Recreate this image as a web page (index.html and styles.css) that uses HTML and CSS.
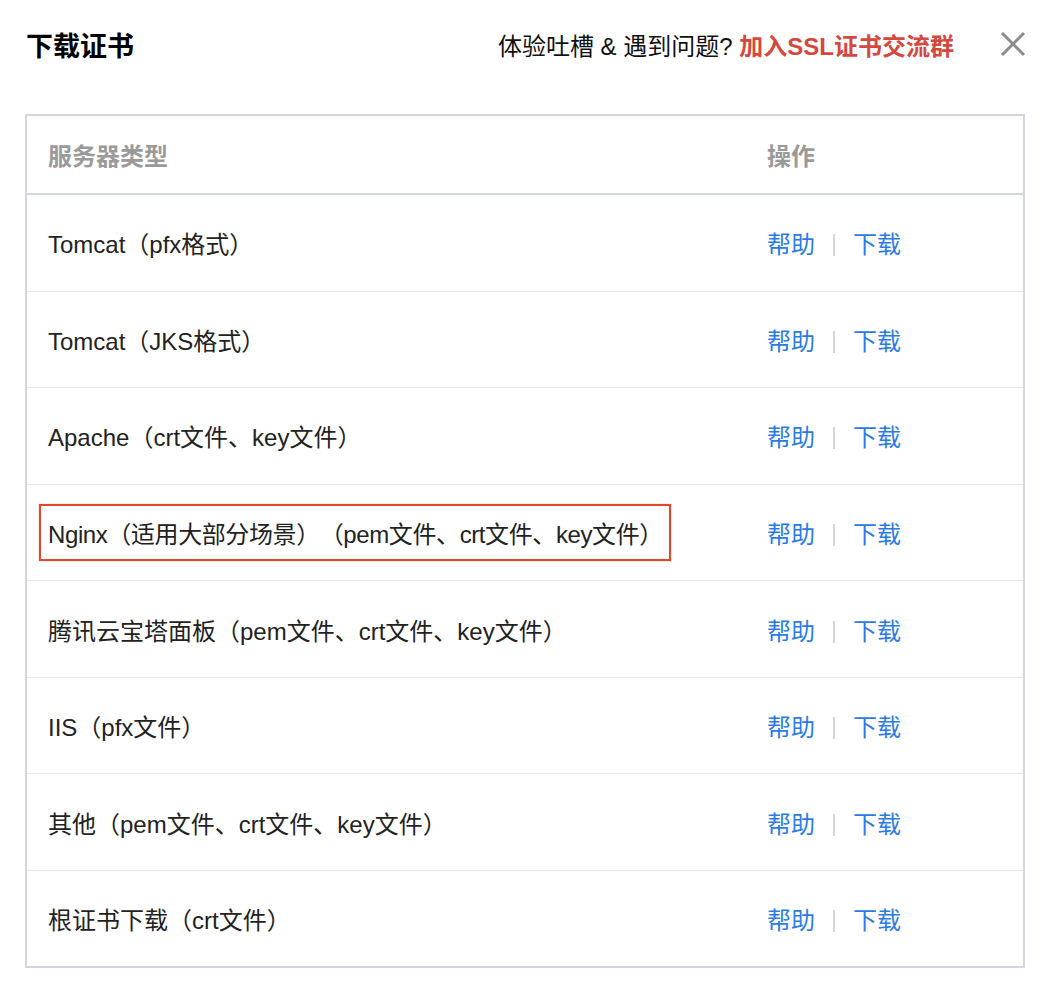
FILE: index.html
```html
<!DOCTYPE html>
<html lang="zh-CN">
<head>
<meta charset="utf-8">
<title>下载证书</title>
<link rel="stylesheet" href="styles.css">
</head>
<body>
<div class="dialog">
  <div class="head">
    <h1 class="title">下载证书</h1>
    <div class="feedback">体验吐槽 &amp; 遇到问题? <a class="join">加入SSL证书交流群</a></div>
    <span class="close">
      <svg width="26" height="26" viewBox="0 0 26 26"><path d="M2 2 L24 24 M24 2 L2 24" stroke="#8c8c8c" stroke-width="3" fill="none"/></svg>
    </span>
  </div>
  <table class="grid">
    <thead>
      <tr><th class="c-type">服务器类型</th><th class="c-op">操作</th></tr>
    </thead>
    <tbody>
      <tr><td>Tomcat（pfx格式）</td><td class="ops"><a>帮助</a><span class="sep"></span><a>下载</a></td></tr>
      <tr><td>Tomcat（JKS格式）</td><td class="ops"><a>帮助</a><span class="sep"></span><a>下载</a></td></tr>
      <tr><td>Apache（crt文件、key文件）</td><td class="ops"><a>帮助</a><span class="sep"></span><a>下载</a></td></tr>
      <tr><td><span class="mark">Nginx（适用大部分场景）（pem文件、crt文件、key文件）</span></td><td class="ops"><a>帮助</a><span class="sep"></span><a>下载</a></td></tr>
      <tr><td>腾讯云宝塔面板（pem文件、crt文件、key文件）</td><td class="ops"><a>帮助</a><span class="sep"></span><a>下载</a></td></tr>
      <tr><td>IIS（pfx文件）</td><td class="ops"><a>帮助</a><span class="sep"></span><a>下载</a></td></tr>
      <tr><td>其他（pem文件、crt文件、key文件）</td><td class="ops"><a>帮助</a><span class="sep"></span><a>下载</a></td></tr>
      <tr><td>根证书下载（crt文件）</td><td class="ops"><a>帮助</a><span class="sep"></span><a>下载</a></td></tr>
    </tbody>
  </table>
</div>
</body>
</html>
```
FILE: styles.css
```css
* { box-sizing: border-box; }
html, body { margin: 0; padding: 0; background: #fff; }
body {
  font-family: "Liberation Sans", "Noto Sans CJK SC", sans-serif;
  color: #222;
  font-size: 24px;
  text-spacing-trim: space-all;
}
.dialog { padding: 0 25px; width: 1050px; }
.head {
  display: flex;
  align-items: center;
  height: 88px;
  margin-bottom: 26px;
}
.title {
  margin: 0 0 0 1px;
  font-size: 27px;
  font-weight: 700;
  color: #000;
  flex: 1;
}
.feedback { color: #111; font-size: 24px; }
.join { color: #d4483f; font-weight: 700; }
.close { display: flex; margin-left: 46px; margin-right: -1px; }
.grid {
  width: 1000px;
  border-collapse: collapse;
  border: 2px solid #d3d6df;
}
.grid th {
  height: 79px;
  text-align: left;
  font-weight: 600;
  color: #9a9a9a;
  padding: 0 0 0 21px;
  border-bottom: 2px solid #d3d6df;
}
.grid .c-op { width: 278px; }
.grid td {
  height: 96.6px;
  padding: 0 0 0 21px;
  border-top: 1px solid #e6e7ea;
  white-space: nowrap;
}
.grid tbody tr:first-child td { border-top: 0; height: 97px; }
.ops a { color: #2b7be6; }
.sep {
  display: inline-block;
  width: 2px;
  height: 22px;
  background: #d6d6d6;
  margin: 0 18px 0 18px;
  vertical-align: -3px;
}
.mark {
  display: inline-block;
  border: 2px solid #e0482a;
  padding: 9px 6px 9px 7px;
  margin-left: -9px;
  letter-spacing: -0.4px;
  box-shadow: 0 0 1px rgba(224, 72, 42, 0.6);
}
```
